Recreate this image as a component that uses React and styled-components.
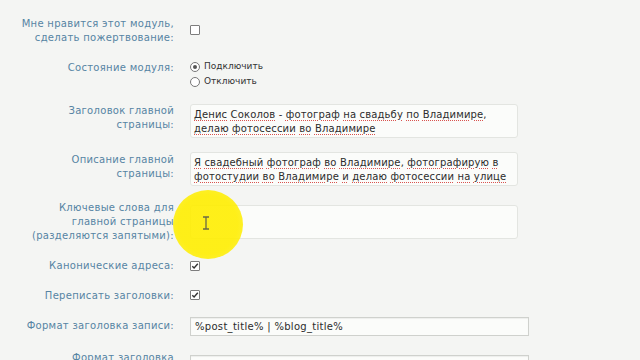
import React from 'react';
import styled, { createGlobalStyle } from 'styled-components';

const Global = createGlobalStyle`
  html, body {
    margin: 0;
    padding: 0;
    background: #f4f5f3;
  }
  body {
    font-family: "DejaVu Sans", Verdana, sans-serif;
    overflow: hidden;
  }
`;

const Page = styled.div`
  position: relative;
  width: 640px;
  height: 360px;
  padding-top: 17px;
  box-sizing: border-box;
`;

const Row = styled.div`
  display: grid;
  grid-template-columns: 174px 1fr;
  column-gap: 16px;
  align-items: start;
  margin-bottom: ${p => p.$gap ?? 15}px;
`;

const Label = styled.div`
  text-align: right;
  color: #5684a3;
  font-size: 10px;
  line-height: 14px;
  letter-spacing: 0.3px;
  padding-top: ${p => p.$top || 0}px;
`;

const Control = styled.div`
  display: flex;
  align-items: flex-start;
  padding-top: ${p => p.$top || 0}px;
`;

const Box = styled.span`
  display: inline-flex;
  align-items: center;
  justify-content: center;
  width: 10px;
  height: 10px;
  box-sizing: border-box;
  border: 1px solid #7d7d7d;
  border-radius: 1px;
  background: #fff;
`;

const RadioList = styled.div`
  display: flex;
  flex-direction: column;
`;

const RadioLine = styled.label`
  display: flex;
  align-items: center;
  gap: 4px;
  font-size: 9px;
  line-height: 15px;
  color: #333;
`;

const Dot = styled.span`
  width: 10px;
  height: 10px;
  box-sizing: border-box;
  border: 1px solid #777;
  border-radius: 50%;
  background: #fff;
  display: inline-flex;
  align-items: center;
  justify-content: center;
  &::after {
    content: '';
    width: 4px;
    height: 4px;
    border-radius: 50%;
    background: ${p => (p.$on ? '#555' : 'transparent')};
  }
`;

const Area = styled.div`
  width: 328px;
  height: 34px;
  box-sizing: border-box;
  background: #fbfcfa;
  border: 1px solid #e3e5e1;
  border-radius: 3px;
  padding: 3px 3px;
  font-size: 10px;
  line-height: 14px;
  color: #2c2c2c;
  letter-spacing: 0.15px;
  white-space: nowrap;
  overflow: hidden;
`;

const Word = styled.span`
  text-decoration: underline dotted #d9534f;
  text-underline-offset: 2px;
`;

const Input = styled.div`
  width: 339px;
  height: 19px;
  box-sizing: border-box;
  background: #fbfcfa;
  border: 1px solid #cfd1cd;
  box-shadow: inset 0 1px 1px rgba(0, 0, 0, 0.06);
  padding: 1px 4px;
  font-size: 10px;
  line-height: 15px;
  color: #2c2c2c;
  letter-spacing: 0.3px;
`;

const Highlight = styled.div`
  position: absolute;
  left: 173px;
  top: 190px;
  width: 70px;
  height: 69px;
  border-radius: 50%;
  background: radial-gradient(circle, rgba(255, 238, 0, 0.9) 60%, rgba(255, 238, 0, 0.75) 90%, rgba(255, 238, 0, 0) 100%);
`;

const CursorWrap = styled.div`
  position: absolute;
  left: 29px;
  top: 25px;
`;

const Check = () => (
  <svg width="8" height="8" viewBox="0 0 8 8">
    <path d="M1.3 4.2 L3.1 6 L6.8 1.8" fill="none" stroke="#333" strokeWidth="1.4" />
  </svg>
);

const Cursor = () => (
  <svg width="8" height="14" viewBox="0 0 8 14">
    <path d="M1 1 H7 M4 1 V13 M1 13 H7" fill="none" stroke="#6b6a45" strokeWidth="1.3" />
  </svg>
);

const Spelled = ({ lines }) =>
  lines.map((line, i) => (
    <div key={i}>
      {line.split(' ').map((w, j) => {
        const m = w.match(/^(.*?)([,]?)$/);
        const isWord = /[А-Яа-яЁё]/.test(m[1]);
        return (
          <React.Fragment key={j}>
            {j > 0 && ' '}
            {isWord ? <Word>{m[1]}</Word> : m[1]}
            {m[2]}
          </React.Fragment>
        );
      })}
    </div>
  ));

export default function App() {
  return (
    <Page>
      <Global />
      <Row $gap={14}>
        <Label>Мне нравится этот модуль,<br />сделать пожертвование:</Label>
        <Control $top={8}><Box /></Control>
      </Row>
      <Row $gap={15}>
        <Label $top={2}>Состояние модуля:</Label>
        <RadioList>
          <RadioLine><Dot $on />Подключить</RadioLine>
          <RadioLine><Dot />Отключить</RadioLine>
        </RadioList>
      </Row>
      <Row $gap={14}>
        <Label>Заголовок главной<br />страницы:</Label>
        <Area>
          <Spelled lines={['Денис Соколов - фотограф на свадьбу по Владимире,', 'делаю фотосессии во Владимире']} />
        </Area>
      </Row>
      <Row $gap={15}>
        <Label $top={1}>Описание главной<br />страницы:</Label>
        <Area>
          <Spelled lines={['Я свадебный фотограф во Владимире, фотографирую в', 'фотостудии во Владимире и делаю фотосессии на улице']} />
        </Area>
      </Row>
      <Row $gap={16}>
        <Label>Ключевые слова для<br />главной страницы<br />(разделяются запятыми):</Label>
        <Control $top={4}><Area /></Control>
      </Row>
      <Row $gap={16}>
        <Label>Канонические адреса:</Label>
        <Control $top={2}><Box><Check /></Box></Control>
      </Row>
      <Row $gap={14}>
        <Label>Переписать заголовки:</Label>
        <Control $top={1}><Box><Check /></Box></Control>
      </Row>
      <Row $gap={15}>
        <Label $top={2}>Формат заголовка записи:</Label>
        <Input>%post_title% | %blog_title%</Input>
      </Row>
      <Row>
        <Label>Формат заголовка<br />страницы:</Label>
        <Control $top={4}><Input /></Control>
      </Row>
      <Highlight>
        <CursorWrap><Cursor /></CursorWrap>
      </Highlight>
    </Page>
  );
}
